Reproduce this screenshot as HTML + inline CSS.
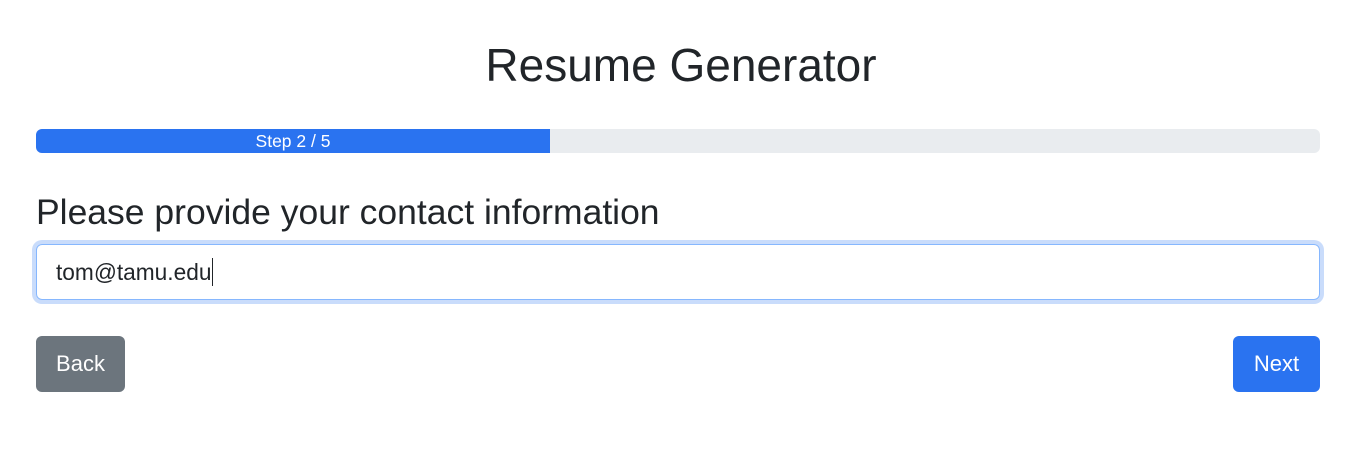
<!DOCTYPE html>
<html><head><style>
body{margin:0;width:1362px;height:462px;background:#fff;font-family:"Liberation Sans",sans-serif;color:#212529;position:relative;overflow:hidden}
h1{position:absolute;left:0;width:1362px;top:40px;margin:0;text-align:center;font-weight:400;font-size:46px;line-height:50px}
.prog{position:absolute;left:36px;top:129px;width:1284px;height:24px;background:#e9ecef;border-radius:6px;overflow:hidden}
.bar{width:514px;height:24px;background:#2a73f0;color:#fff;font-size:17.5px;line-height:24px;text-align:center}
h2{position:absolute;left:36px;top:190px;margin:0;font-weight:400;font-size:35.5px;line-height:44px}
.inp{position:absolute;left:36px;top:244px;width:1282px;height:54px;border:1px solid #86b7fe;border-radius:6px;box-shadow:0 0 0 4px #c9dcfb;font-size:22.7px;line-height:54px;box-sizing:content-box}
.inp span{margin-left:19px}
.caret{display:inline-block;width:1px;height:28px;background:#212529;vertical-align:middle;margin-top:-4px}
.btn{position:absolute;top:336px;height:56px;border-radius:6px;color:#fff;font-size:22px;line-height:56px;text-align:center}
</style></head><body>
<h1>Resume Generator</h1>
<div class="prog"><div class="bar">Step 2 / 5</div></div>
<h2>Please provide your contact information</h2>
<div class="inp"><span>tom@tamu.edu</span><span class="caret" style="margin-left:1px"></span></div>
<div class="btn" style="left:36px;width:89px;background:#6c757d">Back</div>
<div class="btn" style="left:1233px;width:87px;background:#2a73f0">Next</div>
</body></html>
